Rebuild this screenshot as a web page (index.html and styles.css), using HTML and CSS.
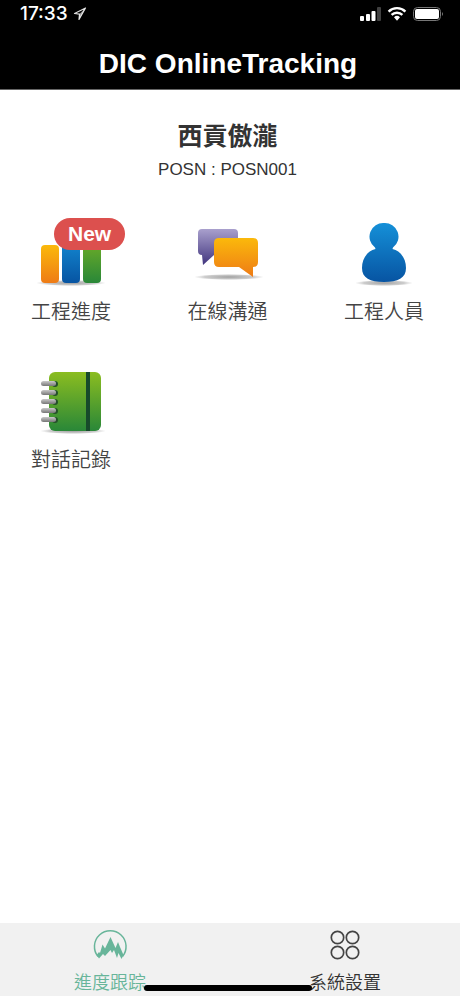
FILE: index.html
```html
<!DOCTYPE html>
<html lang="zh-Hant">
<head>
<meta charset="utf-8">
<meta name="viewport" content="width=device-width, initial-scale=1">
<title>DIC OnlineTracking</title>
<link rel="stylesheet" href="styles.css">
</head>
<body>
<header class="header">
  <div class="status">
    <span class="time">17:33</span>
    <svg class="location" width="14" height="14" viewBox="0 0 14 14" aria-hidden="true"><path d="M12.500 1 1.500 6.500l5 .6-.5 5.400z" fill="none" stroke="#ddd" stroke-width="1.200" stroke-linejoin="round"/><path d="M12.500 1 6.500 7 6 12.500z" fill="#fff" opacity=".6"/></svg>
    <svg class="signals" width="86" height="16" viewBox="0 0 86 16" aria-hidden="true">
      <g fill="#fff"><rect x="1" y="10" width="4" height="5" rx="1"/><rect x="7" y="8" width="4" height="7" rx="1"/><rect x="12.500" y="5" width="4" height="10" rx="1"/><rect x="18" y="1" width="4" height="14" rx="1" opacity=".25"/>
      <path d="M35 11.200 38 14.800l3-3.600a4.500 4.500 0 0 0-6 0z"/></g>
      <g fill="none" stroke="#fff" stroke-width="2.400"><path d="M29.600 5.600a12 12 0 0 1 16.800 0"/><path d="M32.600 8.900a7.700 7.700 0 0 1 10.800 0"/></g>
      <rect x="54.500" y="1.500" width="27" height="13" rx="4" fill="none" stroke="#777"/><rect x="56" y="3" width="24" height="10" rx="2" fill="#fff"/><path d="M83 6q2 2 0 4z" fill="#777"/>
    </svg>
  </div>
  <h1 class="title">DIC OnlineTracking</h1>
</header>
<main class="main">
  <h2 class="project">西貢傲瀧</h2>
  <p class="code">POSN : POSN001</p>
  <nav class="menu" aria-label="功能">
    <a class="item" href="#progress">
      <svg class="icon" viewBox="0 0 82 82" aria-hidden="true">
        <defs>
          <linearGradient id="orange" x2="0" y2="1"><stop stop-color="#fbb90b"/><stop offset="1" stop-color="#ee7b16"/></linearGradient>
          <linearGradient id="blue" x2="0" y2="1"><stop stop-color="#1590d8"/><stop offset="1" stop-color="#0754a2"/></linearGradient>
          <linearGradient id="green" x2="0" y2="1"><stop stop-color="#8bbd20"/><stop offset="1" stop-color="#298738"/></linearGradient>
          <linearGradient id="purple" x2="0" y2="1"><stop stop-color="#a9a0cd"/><stop offset="1" stop-color="#41357e"/></linearGradient>
          <linearGradient id="metal" x2="0" y2="1"><stop stop-color="#c9c9c9"/><stop offset="1" stop-color="#777"/></linearGradient>
          <radialGradient id="shade"><stop stop-color="#888" stop-opacity=".8"/><stop offset=".7" stop-color="#999" stop-opacity=".5"/><stop offset="1" stop-color="#aaa" stop-opacity="0"/></radialGradient>
        </defs>
        <ellipse cx="41" cy="68" rx="35" ry="3" fill="url(#shade)"/>
        <rect x="11" y="30" width="18" height="38" rx="4" fill="url(#orange)"/>
        <rect x="32" y="19" width="18" height="49" rx="4" fill="url(#blue)"/>
        <rect x="53" y="9" width="18" height="59" rx="4" fill="url(#green)"/>
      </svg>
      <span class="badge">New</span>
      <span class="label">工程進度</span>
    </a>
    <a class="item" href="#chat">
      <svg class="icon" viewBox="0 0 82 82" aria-hidden="true">
        <ellipse cx="42" cy="62" rx="35" ry="3" fill="url(#shade)"/>
        <path d="M15 14h32q4 0 4 4v18q0 4-4 4H27L16 50l-1-10q-4 0-4-4V18q0-4 4-4z" fill="url(#purple)"/>
        <path d="M32 23h34q5 0 5 5v19q0 5-5 5L66 62 52 52H32q-5 0-5-5V28q0-5 5-5z" fill="url(#orange)"/>
      </svg>
      <span class="label">在線溝通</span>
    </a>
    <a class="item" href="#staff">
      <svg class="icon" viewBox="0 0 82 82" aria-hidden="true">
        <ellipse cx="41" cy="68" rx="29" ry="3" fill="url(#shade)"/>
        <path d="M41 8a13.600 13.600 0 0 1 9 24.500L49.500 34C58 36 63 44 63 53c0 10-8 14-22 14s-22-4-22-14c0-9 5-17 13.500-19L32 32.500A13.600 13.600 0 0 1 41 8z" fill="url(#blue)"/>
      </svg>
      <span class="label">工程人員</span>
    </a>
    <a class="item" href="#records">
      <svg class="icon" viewBox="0 0 82 82" aria-hidden="true">
        <ellipse cx="43" cy="68" rx="33" ry="3" fill="url(#shade)"/>
        <rect x="19" y="9" width="52" height="59" rx="6" fill="url(#green)"/>
        <rect x="56" y="9" width="4" height="59" fill="#174a2b"/>
        <g fill="#24502a"><circle cx="25" cy="21" r="3"/><circle cx="25" cy="30" r="3"/><circle cx="25" cy="39" r="3"/><circle cx="25" cy="48" r="3"/><circle cx="25" cy="57" r="3"/></g>
        <g fill="url(#metal)"><rect x="11" y="18" width="15" height="5" rx="2.500"/><rect x="11" y="27" width="15" height="5" rx="2.500"/><rect x="11" y="36" width="15" height="5" rx="2.500"/><rect x="11" y="45" width="15" height="5" rx="2.500"/><rect x="11" y="54" width="15" height="5" rx="2.500"/></g>
      </svg>
      <span class="label">對話記錄</span>
    </a>
  </nav>
</main>
<nav class="tabs" aria-label="主選單">
  <a class="tab active" href="#tracking" aria-current="page">
    <svg width="36" height="36" viewBox="0 0 36 36" aria-hidden="true">
      <path d="M6 28.500A15.800 15.800 0 1 1 30.500 28.500" fill="none" stroke="#68b59a" stroke-width="1.500"/>
      <path d="M4.500 27 7 24l1 1 2.500-8.500 2.500 4L18.500 9l5 11L26 14l2 5 3.500 8-2 4-3-6-1.500 5-3-8-2 3-1.500-3-5.500 6-2-2L7 30.500z" fill="#68b59a"/>
    </svg>
    <span>進度跟踪</span>
  </a>
  <a class="tab" href="#settings">
    <svg width="36" height="36" viewBox="0 0 36 36" aria-hidden="true"><g fill="none" stroke="#444" stroke-width="1.700"><circle cx="10.500" cy="9.500" r="6.200"/><circle cx="25.500" cy="9.500" r="6.200"/><circle cx="10.500" cy="24.500" r="6.200"/><circle cx="25.500" cy="24.500" r="6.200"/></g></svg>
    <span>系統設置</span>
  </a>
  <div class="home-indicator"></div>
</nav>
</body>
</html>
```
FILE: styles.css
```css
* { box-sizing: border-box; }
body {
  margin: 0;
  min-height: 100vh;
  display: flex;
  flex-direction: column;
  background: #fff;
  color: #333;
  font-family: "Liberation Sans", "Noto Sans CJK TC", sans-serif;
}
a { color: inherit; text-decoration: none; }
.header { background: #000; color: #fff; padding-bottom: 7px; border-bottom: 1px solid #666; }
.status { display: flex; align-items: center; height: 28px; padding: 0 15px 0 20px; }
.time { font: 500 19px/28px Inter, sans-serif; }
.location { margin-left: 5px; }
.signals { margin-left: auto; }
.title { margin: 18px 0 0; padding-right: 4px; font-size: 28px; line-height: 36px; font-weight: 700; text-align: center; }
.main { flex: 1; padding: 26px 5px 0 0; }
.project { margin: 0; font-size: 25px; line-height: 40px; font-weight: 700; text-align: center; }
.code { margin: 4px 0 0; font-size: 17px; line-height: 20px; text-align: center; }
.menu {
  display: grid;
  grid-template-columns: repeat(3, 82px);
  justify-content: space-between;
  row-gap: 36px;
  padding: 35px 30px 0;
}
.item { position: relative; display: flex; flex-direction: column; align-items: center; }
.icon { width: 82px; height: 82px; }
.badge {
  position: absolute;
  top: 3px;
  left: 24px;
  padding: 0 14px;
  border-radius: 16px;
  background: #dc504e;
  color: #fff;
  font-size: 21px;
  line-height: 32px;
  font-weight: 700;
}
.label { color: #444; font-size: 20px; line-height: 30px; font-weight: 350; white-space: nowrap; }
.tabs {
  position: relative;
  display: flex;
  justify-content: space-between;
  padding: 5px 79px 0 74px;
  background: #f1f1f1;
}
.tab { display: flex; flex-direction: column; align-items: center; gap: 7px; font-size: 18px; line-height: 25px; font-weight: 350; }
.active { color: #68b59a; }
.home-indicator {
  position: absolute;
  bottom: 5px;
  left: calc(50% - 86px);
  width: 168px;
  height: 6px;
  border-radius: 3px;
  background: #000;
}
```
